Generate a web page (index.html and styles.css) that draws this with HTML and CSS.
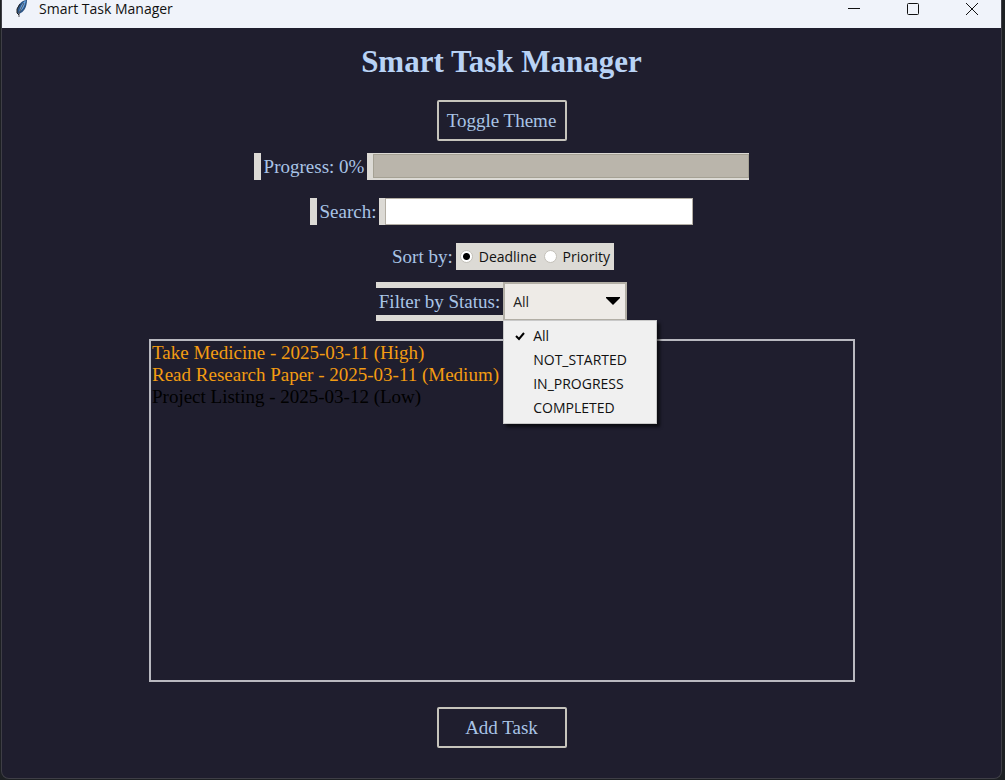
FILE: index.html
```html
<!DOCTYPE html>
<html lang="en">
<head>
<meta charset="utf-8">
<title>Smart Task Manager</title>
<link rel="stylesheet" href="styles.css">
</head>
<body>
<div class="window">
  <header class="titlebar">
    <svg class="app-icon" width="16" height="18" viewBox="0 0 16 18" aria-hidden="true">
      <path d="M12 0C7 1 4 5 3 9L3 13L5 14C10 12 13 7 13 0Z" fill="#2c5484"/>
      <path d="M12 0C8 3 6 7 5 12C9 10 11 5 12 0Z" fill="#6aa9e8"/>
      <path d="M10 3L5 13L5 17" fill="none" stroke="#55555c" stroke-width="1"/>
      <path d="M6 4L3 9L3 13L5 15" fill="none" stroke="#222" stroke-width="1"/>
    </svg>
    <span class="caption">Smart Task Manager</span>
    <div class="controls">
      <button class="control" type="button" aria-label="Minimize"><svg width="12" height="12" viewBox="0 0 12 12"><path d="M0 5.5H12"/></svg></button>
      <button class="control" type="button" aria-label="Maximize"><svg width="12" height="12" viewBox="0 0 12 12"><rect x=".5" y=".5" width="11" height="11" rx="1"/></svg></button>
      <button class="control" type="button" aria-label="Close"><svg width="12" height="12" viewBox="0 0 12 12"><path d="M0 0L12 12M12 0L0 12"/></svg></button>
    </div>
  </header>
  <main class="content">
    <h1 class="heading">Smart Task Manager</h1>
    <button class="button" type="button">Toggle Theme</button>
    <div class="row">
      <span class="edge"></span>
      <label class="label" for="progress">Progress: 0%</label>
      <div class="progress-frame"><div id="progress" class="progress" role="progressbar" aria-valuenow="0" aria-label="Progress"></div></div>
    </div>
    <div class="row">
      <span class="edge"></span>
      <label class="label" for="search">Search:</label>
      <div class="search-frame"><input id="search" class="search" type="text"></div>
    </div>
    <div class="row">
      <span class="label">Sort by:</span>
      <div class="radios">
        <label class="option"><input class="radio" type="radio" name="sort" checked>Deadline</label>
        <label class="option"><input class="radio" type="radio" name="sort">Priority</label>
      </div>
    </div>
    <div class="filter">
      <label class="label filter-label" for="status">Filter by Status:</label>
      <div class="dropdown">
        <select id="status" class="select">
          <option>All</option>
          <option>NOT_STARTED</option>
          <option>IN_PROGRESS</option>
          <option>COMPLETED</option>
        </select>
        <svg class="arrow" width="14" height="8" viewBox="0 0 14 8" aria-hidden="true"><path d="M0 0H14V1L7 8L0 1Z"/></svg>
        <ul class="menu">
          <li><button class="item" type="button"><svg width="10" height="10" viewBox="0 0 10 10" aria-hidden="true"><path d="M1 5L4 8L9 2" fill="none" stroke="#000" stroke-width="2"/></svg>All</button></li>
          <li><button class="item" type="button">NOT_STARTED</button></li>
          <li><button class="item" type="button">IN_PROGRESS</button></li>
          <li><button class="item" type="button">COMPLETED</button></li>
        </ul>
      </div>
    </div>
    <ul class="tasks">
      <li class="task">Take Medicine - 2025-03-11 (High)</li>
      <li class="task">Read Research Paper - 2025-03-11 (Medium)</li>
      <li class="task task-low">Project Listing - 2025-03-12 (Low)</li>
    </ul>
    <button class="button" type="button">Add Task</button>
  </main>
</div>
</body>
</html>
```
FILE: styles.css
```css
* { box-sizing: border-box; }

:root {
  --serif: "Liberation Serif", "Cambria", serif;
  --sans: "Open Sans", "Segoe UI", sans-serif;
  --base: #1f1e2e;
  --panel: #dcdad5;
  --accent: #a9c4e6;
}

body {
  margin: 0;
  background: #1d2023;
  font-family: var(--sans);
  font-size: 14px;
}

.window {
  display: flex;
  flex-direction: column;
  min-height: calc(100vh - 1px);
  margin: 0 3px 1px 1px;
  border: 1px solid #3e3e46;
  border-top: 0;
  border-radius: 0 0 8px 8px;
  background: var(--base);
}

.titlebar {
  display: flex;
  align-items: flex-start;
  height: 28px;
  padding-left: 12px;
  background: #f0f3fa;
  color: #111;
}

.app-icon { margin-right: 9px; }

.caption { line-height: 18px; }

.controls { display: flex; margin-left: auto; }

.control {
  display: flex;
  justify-content: center;
  width: 59px;
  height: 28px;
  padding: 3px 0;
  border: 0;
  background: none;
}

.control svg { fill: none; stroke: #111; }

.content {
  display: flex;
  flex: 1;
  flex-direction: column;
  align-items: center;
  padding: 14px 0 30px;
}

.heading {
  margin: 0 0 18px;
  color: #b9d3f5;
  font: bold 31px/40px var(--serif);
}

.button {
  width: 130px;
  height: 41px;
  padding: 0;
  border: 2px solid #c6c4bc;
  border-radius: 2px;
  background: var(--base);
  color: var(--accent);
  font: 19px/24px var(--serif);
}

.row {
  display: flex;
  height: 27px;
  margin-top: 18px;
}

.button + .row { margin-top: 12px; }

.edge { width: 7px; background: var(--panel); }

.label {
  padding: 0 3px;
  color: var(--accent);
  font: 19px/27px var(--serif);
  white-space: nowrap;
}

.progress-frame {
  padding: 1px 0 2px 6px;
  background: var(--panel);
}

.progress {
  width: 376px;
  height: 24px;
  border: 1px solid #a5a194;
  background: #bab5ab;
}

.search-frame { padding-left: 6px; background: var(--panel); }

.search {
  width: 308px;
  height: 27px;
  padding: 0 4px;
  border: 1px solid #b3aea4;
  background: #fff;
  font: 14px/24px var(--sans);
}

.radios {
  display: flex;
  gap: 7px;
  padding: 0 4px;
  background: var(--panel);
}

.option {
  display: flex;
  align-items: center;
  gap: 6px;
  color: #111;
}

.radio {
  appearance: none;
  width: 13px;
  height: 13px;
  margin: 0;
  border: 1px solid #c3c0b9;
  border-radius: 50%;
  background: #fff;
}

.radio:checked { background: radial-gradient(circle, #000 3px, #fff 4px); }

.filter { display: flex; height: 39px; margin-top: 12px; }

.filter-label {
  border: solid var(--panel);
  border-width: 6px 0;
}

.dropdown { position: relative; }

.select {
  appearance: none;
  display: block;
  width: 124px;
  height: 39px;
  padding: 0 8px;
  border: 2px solid #b3afa6;
  border-radius: 0;
  background: #eeebe7;
  color: #222;
  font: 14px/24px var(--sans);
}

.arrow { position: absolute; top: 15px; right: 7px; }

.menu {
  position: absolute;
  top: 38px;
  left: 0;
  width: 154px;
  margin: 0;
  padding: 3px 0;
  border: 1px solid #c9c9c9;
  background: #f0f0f0;
  box-shadow: 3px 3px 3px rgba(0, 0, 0, .6);
  list-style: none;
}

.item {
  display: grid;
  grid-template-columns: 29px 1fr;
  align-items: center;
  justify-items: start;
  width: 100%;
  height: 24px;
  padding: 0;
  border: 0;
  background: none;
  color: #111;
  font: 14px/24px var(--sans);
}

.item:not(:has(svg))::before { content: ""; }

.item svg { margin-left: 11px; }

.tasks {
  flex: 1;
  align-self: stretch;
  margin: 18px 146px 25px 147px;
  padding: 1px;
  border: 2px solid #b9b9c0;
  color: #f39c12;
  font: 19px/22px var(--serif);
  list-style: none;
}

.task-low { color: #000; }
```
